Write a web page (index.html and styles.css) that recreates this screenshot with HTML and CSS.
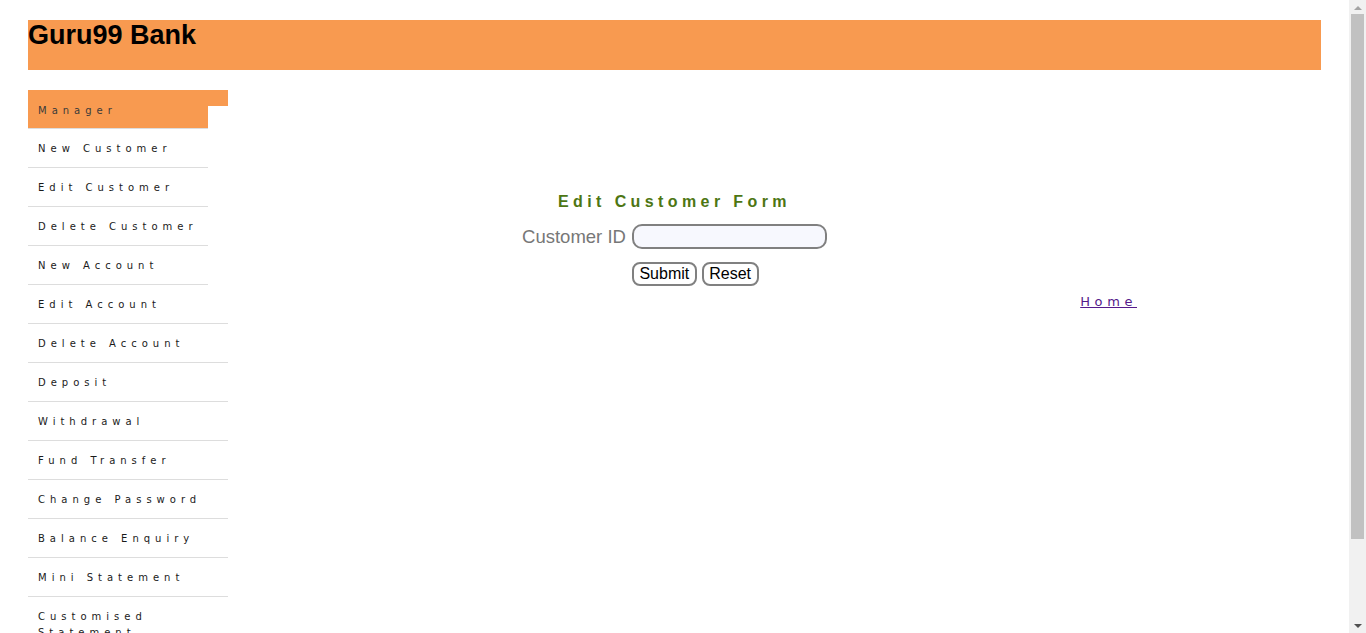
FILE: index.html
```html
<!DOCTYPE html>
<html lang="en">
<head>
<meta charset="utf-8">
<title>Guru99 Bank Edit Customer</title>
<link rel="stylesheet" href="styles.css">
</head>
<body>
<div class="page">
  <header class="header">
    <h1 class="brand">Guru99 Bank</h1>
  </header>
  <div class="layout">
    <ul class="menu">
      <li class="menu-item manager"><a href="#">Manager</a></li>
      <li class="menu-item narrow"><a href="#">New Customer</a></li>
      <li class="menu-item narrow"><a href="#">Edit Customer</a></li>
      <li class="menu-item narrow"><a href="#">Delete Customer</a></li>
      <li class="menu-item narrow"><a href="#">New Account</a></li>
      <li class="menu-item"><a href="#">Edit Account</a></li>
      <li class="menu-item"><a href="#">Delete Account</a></li>
      <li class="menu-item"><a href="#">Deposit</a></li>
      <li class="menu-item"><a href="#">Withdrawal</a></li>
      <li class="menu-item"><a href="#">Fund Transfer</a></li>
      <li class="menu-item"><a href="#">Change Password</a></li>
      <li class="menu-item"><a href="#">Balance Enquiry</a></li>
      <li class="menu-item"><a href="#">Mini Statement</a></li>
      <li class="menu-item"><a href="#">Customised Statement</a></li>
      <li class="menu-item"><a href="#">Log out</a></li>
    </ul>
    <main class="main">
      <div class="form-wrap">
        <form class="form">
          <p class="form-title">Edit Customer Form</p>
          <label class="label" for="cusid">Customer ID</label>
          <input class="field" id="cusid" type="text">
          <div class="buttons">
            <button type="button" class="btn">Submit</button>
            <button type="reset" class="btn">Reset</button>
          </div>
        </form>
      </div>
      <div class="home-row"><a class="home" href="#">Home</a></div>
    </main>
  </div>
</div>
<div class="scrollbar" aria-hidden="true">
  <div class="sb-btn"><span class="arrow-up"></span></div>
  <div class="sb-track"><div class="sb-thumb"></div></div>
  <div class="sb-btn"><span class="arrow-down"></span></div>
</div>
</body>
</html>
```

FILE: styles.css
```css
html, body {
  margin: 0;
  padding: 0;
  background: #ffffff;
}
body {
  font-family: "Liberation Sans", Arial, sans-serif;
}
.page {
  padding: 20px 45px 40px 28px;
}
.header {
  background: #f89a50;
  height: 50px;
}
.brand {
  margin: 0;
  font-size: 27px;
  font-weight: bold;
  color: #000;
  line-height: normal;
}
.layout {
  display: grid;
  grid-template-columns: 200px 1fr;
  margin-top: 20px;
  align-items: start;
}
.menu {
  list-style: none;
  margin: 0;
  padding: 0;
  width: 200px;
}
.menu-item {
  border-bottom: 1px solid #dddddd;
  padding: 12px 0 10px 10px;
  font-family: "DejaVu Sans", Verdana, sans-serif;
  font-size: 10px;
  line-height: 16px;
  letter-spacing: 5px;
}
.menu-item a {
  color: #1a1a1a;
  text-decoration: none;
}
.menu-item.narrow {
  width: 170px;
}
.manager {
  border-bottom: none;
  padding-top: 13px;
  padding-bottom: 10px;
  background:
    linear-gradient(#f89a50, #f89a50) left top / 100% 16px no-repeat,
    linear-gradient(#f89a50, #f89a50) left top / 180px calc(100% - 1px) no-repeat,
    linear-gradient(#dddddd, #dddddd) left bottom / 180px 1px no-repeat;
}
.manager a {
  color: #3a3a3a;
}
.main {
  display: flex;
  flex-direction: column;
}
.form-wrap {
  margin-right: 200px;
  display: flex;
  justify-content: center;
  padding-top: 103px;
}
.form {
  display: grid;
  grid-template-columns: auto auto;
  column-gap: 6px;
  align-items: center;
  margin: 0;
}
.form-title {
  grid-column: 1 / 3;
  margin: 0 0 13px 0;
  text-align: center;
  font-size: 16px;
  line-height: 18px;
  font-weight: bold;
  letter-spacing: 4.4px;
  color: #4d7613;
}
.label {
  font-size: 18.5px;
  color: #777777;
  text-align: right;
}
.field {
  width: 195px;
  height: 25px;
  box-sizing: border-box;
  border: 2px solid #808080;
  border-radius: 10px;
  background: #f7f8fe;
  padding: 0 6px;
  margin: 0;
  font-size: 14px;
}
.buttons {
  grid-column: 2;
  display: flex;
  gap: 5px;
  margin-top: 13px;
}
.btn {
  height: 24px;
  box-sizing: border-box;
  border: 2px solid #808080;
  border-radius: 8px;
  background: #ffffff;
  color: #000;
  font-family: "Liberation Sans", Arial, sans-serif;
  font-size: 16px;
  padding: 0 5.5px;
  margin: 0;
  line-height: 18px;
}
.home-row {
  text-align: right;
  padding-right: 184px;
  margin-top: 6px;
}
.home {
  font-family: "DejaVu Sans", Verdana, sans-serif;
  font-size: 13px;
  letter-spacing: 4.6px;
  color: #551a8b;
  text-decoration: underline;
}
.scrollbar {
  position: fixed;
  top: 0;
  right: 0;
  width: 17px;
  height: 100vh;
  background: #f1f1f1;
  display: flex;
  flex-direction: column;
}
.sb-btn {
  height: 14px;
  display: flex;
  align-items: center;
  justify-content: center;
  flex: none;
}
.sb-track {
  flex: 1;
  padding: 0 2px;
}
.sb-thumb {
  height: 525px;
  background: #c1c1c1;
}
.arrow-up {
  width: 0;
  height: 0;
  border-left: 4px solid transparent;
  border-right: 4px solid transparent;
  border-bottom: 4px solid #a3a3a3;
  margin-top: 1px;
}
.arrow-down {
  width: 0;
  height: 0;
  border-left: 4px solid transparent;
  border-right: 4px solid transparent;
  border-top: 4px solid #505050;
  margin-bottom: 1px;
}
```
